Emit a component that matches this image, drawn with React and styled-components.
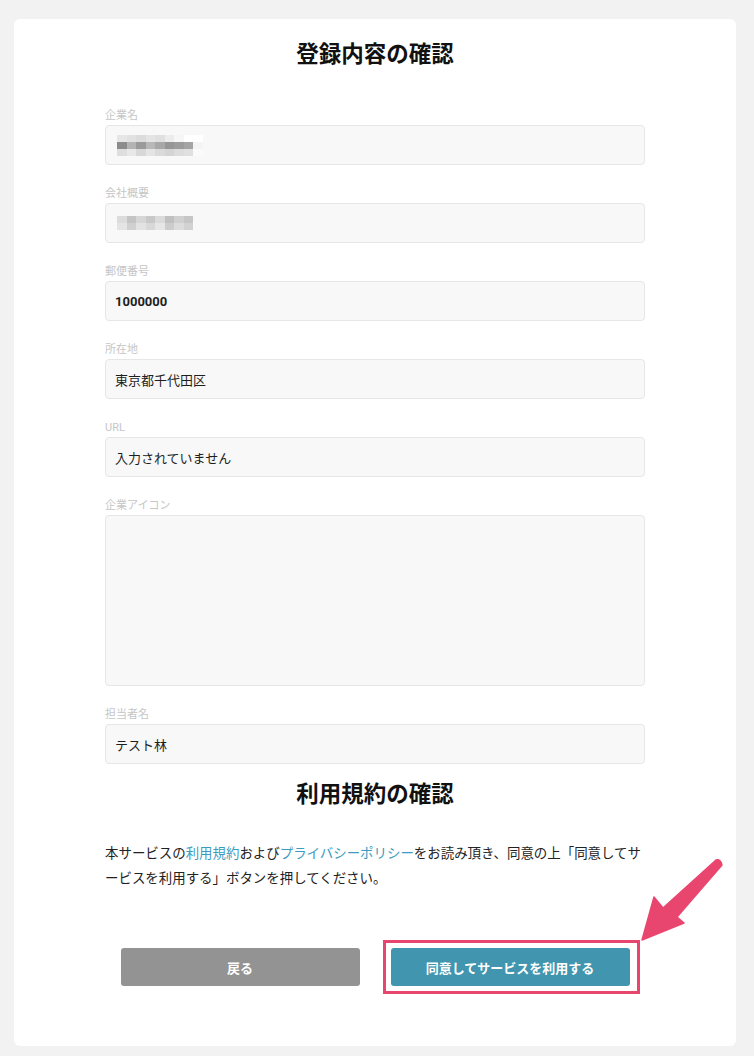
import React from "react";
import styled, { createGlobalStyle } from "styled-components";

const GlobalStyle = createGlobalStyle`
  html, body {
    margin: 0;
    padding: 0;
    background: #f2f2f2;
  }
  body {
    font-family: "Roboto", "Noto Sans CJK JP", sans-serif;
    color: #222;
  }
`;

const fields = [
  { label: "企業名", mosaic: "company" },
  { label: "会社概要", mosaic: "about" },
  { label: "郵便番号", value: "1000000", bold: true },
  { label: "所在地", value: "東京都千代田区" },
  { label: "URL", value: "入力されていません" },
  { label: "企業アイコン", tall: true },
  { label: "担当者名", value: "テスト林" },
];

// blurred-out values, shades per cell
const mosaics = {
  company: [
    ["#e6e6e6", "#e2e2e2", "#dcdcdc", "#e4e4e4", "#e0e0e0", "#ececec", "#f6f6f6", "#ffffff", "#ffffff"],
    ["#8c8c8c", "#b4b4b4", "#9a9a9a", "#b8b8b8", "#a8a8a8", "#969696", "#9c9c9c", "#a4a4a4", "#f4f4f4"],
    ["#dedede", "#e8e8e8", "#d8d8d8", "#e4e4e4", "#dadada", "#d4d4d4", "#dcdcdc", "#e0e0e0", "#fafafa"],
  ],
  about: [
    ["#dcdcdc", "#c4c4c4", "#d6d6d6", "#c8c8c8", "#dadada", "#c0c0c0", "#d0d0d0", "#c6c6c6"],
    ["#e4e4e4", "#d0d0d0", "#e2e2e2", "#d8d8d8", "#e6e6e6", "#cccccc", "#dcdcdc", "#d2d2d2"],
  ],
};

const App = () => {
  return (
    <Page>
      <GlobalStyle />
      <Card>
        <Title>登録内容の確認</Title>
        <FieldList>
          {fields.map((f) => (
            <Field key={f.label}>
              <Label>{f.label}</Label>
              <Box tall={f.tall ? 1 : 0}>
                {f.mosaic && (
                  <Mosaic>
                    {mosaics[f.mosaic].map((row, i) => (
                      <MosaicRow key={i}>
                        {row.map((c, j) => (
                          <Cell key={j} style={{ background: c }} />
                        ))}
                      </MosaicRow>
                    ))}
                  </Mosaic>
                )}
                {f.value && <Value bold={f.bold ? 1 : 0}>{f.value}</Value>}
              </Box>
            </Field>
          ))}
        </FieldList>

        <SubTitle>利用規約の確認</SubTitle>
        <Terms>
          本サービスの<Link>利用規約</Link>および<Link>プライバシーポリシー</Link>
          をお読み頂き、同意の上「同意してサ
          <br />
          ービスを利用する」ボタンを押してください。
        </Terms>

        <Actions>
          <Button variant="back">戻る</Button>
          <Highlight>
            <Button variant="agree">同意してサービスを利用する</Button>
          </Highlight>
        </Actions>

        <Arrow viewBox="0 0 90 90" width="90" height="90">
          <path
            d="M6 85 L18 42 L27 53 L80 5 Q85 4 86 10 L41 62 L48 68 Z"
            fill="#e9466f"
            stroke="#e9466f"
            strokeWidth="1.5"
            strokeLinejoin="round"
          />
        </Arrow>
      </Card>
    </Page>
  );
};

const Page = styled.div`
  padding: 19px 18px 10px 14px;
`;

const Card = styled.div`
  position: relative;
  background: #fff;
  border-radius: 6px;
  width: 722px;
  box-sizing: border-box;
  padding: 19px 91px 60px;
`;

const Title = styled.h1`
  margin: 0;
  text-align: center;
  font-size: 22.5px;
  line-height: 32px;
  font-weight: 700;
  color: #111;
`;

const SubTitle = styled(Title)`
  margin-top: 14px;
`;

const FieldList = styled.div`
  display: flex;
  flex-direction: column;
  gap: 21px;
  margin-top: 38px;
`;

const Field = styled.div`
  display: flex;
  flex-direction: column;
  gap: 1px;
`;

const Label = styled.div`
  font-size: 11px;
  line-height: 16px;
  color: #c6c6c6;
`;

const Box = styled.div`
  box-sizing: border-box;
  height: ${(p) => (p.tall ? "171px" : "40px")};
  background: #f8f8f8;
  border: 1px solid #e6e6e6;
  border-radius: 4px;
  padding: 0 9px;
  display: flex;
  align-items: center;
`;

const Value = styled.span`
  font-size: 13px;
  font-weight: ${(p) => (p.bold ? 700 : 400)};
  color: #1e1e1e;
`;

const Mosaic = styled.div`
  display: flex;
  flex-direction: column;
  margin-left: 2px;
`;

const MosaicRow = styled.div`
  display: flex;
`;

const Cell = styled.span`
  width: 9.5px;
  height: 7px;
`;

const Terms = styled.p`
  margin: 31px 0 0;
  font-size: 13.45px;
  line-height: 25px;
  color: #222;
`;

const Link = styled.span`
  color: #3d9bc0;
`;

const Actions = styled.div`
  display: flex;
  justify-content: center;
  gap: 31px;
  margin-top: 57px;
`;

const Highlight = styled.div`
  border: 3px solid #e9466f;
  padding: 5px 7px 5px 5px;
  margin: -8px -10px -8px -8px;
  display: flex;
`;

const Button = styled.button`
  width: 239px;
  height: 38px;
  border: none;
  border-radius: 3px;
  font-family: "Roboto", "Noto Sans CJK JP", sans-serif;
  font-size: 13px;
  font-weight: 700;
  color: #fff;
  background: ${(p) => (p.variant === "agree" ? "#4195ae" : "#939393")};
  cursor: pointer;
`;

const Arrow = styled.svg`
  position: absolute;
  left: 622px;
  top: 836px;
  overflow: visible;
`;

export default App;
